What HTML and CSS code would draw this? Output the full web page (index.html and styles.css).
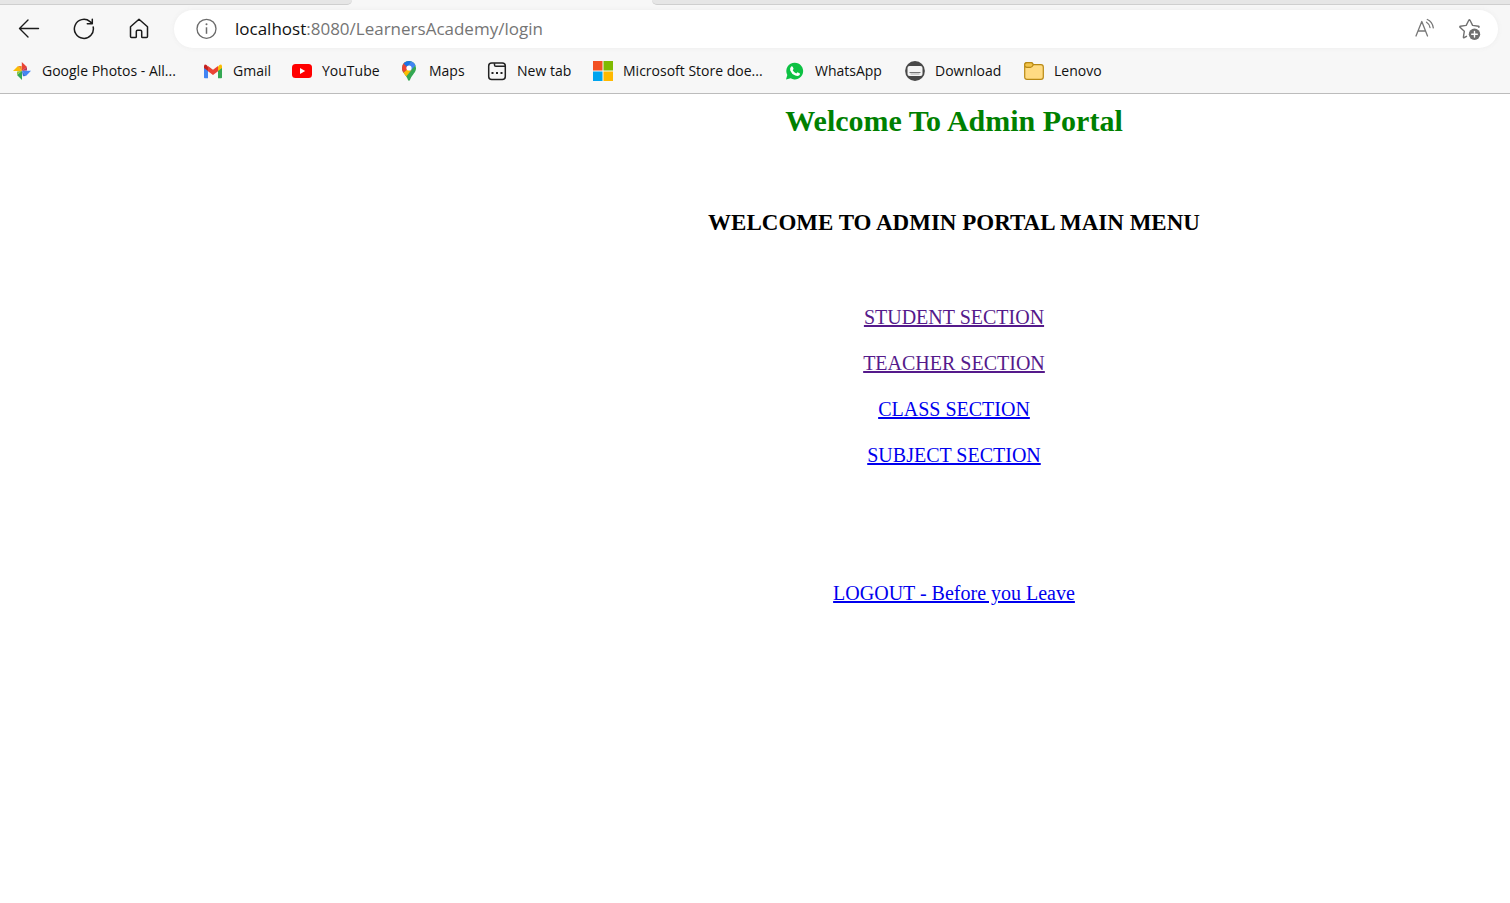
FILE: index.html
```html
<!DOCTYPE html>
<html lang="en">
<head>
<meta charset="utf-8">
<title>Admin Portal</title>
<link rel="stylesheet" href="styles.css">
</head>
<body>
<header class="browser">
  <div class="tabs"><span class="tab tab-left"></span><span class="tab-active"></span><span class="tab tab-right"></span></div>
  <div class="toolbar">
    <button class="tool" aria-label="Back"><svg width="22" height="22" viewBox="0 0 22 22" fill="none" stroke="#1b1b1b" stroke-width="1.4" stroke-linecap="round" stroke-linejoin="round"><path d="M20.5 10.500H1.500M10 2 1.500 10.500l8.500 8.500"/></svg></button>
    <button class="tool" aria-label="Refresh"><svg width="22" height="22" viewBox="0 0 22 22" fill="none" stroke="#1b1b1b" stroke-width="1.5" stroke-linecap="round" stroke-linejoin="round"><path d="M20.200 9A9.500 9.500 0 1 1 17 3.600l2.300 2M19.300 1.200v4.600h-5"/></svg></button>
    <button class="tool" aria-label="Home"><svg width="22" height="22" viewBox="0 0 22 22" fill="none" stroke="#1b1b1b" stroke-width="1.5" stroke-linejoin="round"><path d="M2.500 8.700 11 1.300l8.500 7.400V18.500q0 1-1 1H14.500q-.8 0-.8-.8V13.500q0-1.200-1.200-1.200h-3Q8.300 12.300 8.300 13.500v5.200q0 .8-.8.8h-4q-1 0-1-1z"/></svg></button>
    <div class="address">
      <button class="site-info" aria-label="Site information"><svg width="22" height="22" viewBox="0 0 22 22" fill="none" stroke="#6b6b6b" stroke-width="1.300"><circle cx="11.500" cy="10.800" r="9.500"/><path d="M11.500 9.300v6.500" stroke-width="1.500"/><circle cx="11.500" cy="6.300" r="1" fill="#6b6b6b" stroke="none"/></svg></button>
      <div class="url"><span class="host">localhost</span>:8080/LearnersAcademy/login</div>
      <button class="action" aria-label="Read aloud"><svg width="22" height="22" viewBox="0 0 22 22" fill="none" stroke="#777" stroke-width="1.300" stroke-linecap="round" stroke-linejoin="round"><path d="M2 18 7.800 3.500l5.700 14.500M4 13h7.600M12.500 4.200q3 1.800 3.500 5.300M13.300 1.500q5 2 6 8.300"/></svg></button>
      <button class="action" aria-label="Add to favorites"><svg width="24" height="24" viewBox="0 0 24 24" fill="none" stroke="#707070" stroke-width="1.400" stroke-linejoin="round" stroke-linecap="round"><path d="m8.500 19.300-2.300 1.400q-.9.400-.8-.6l.9-5.800L2 10.300q-.6-.8.400-1.100L8.200 8.400 10.900 3q.5-.8 1 0l2.700 5.400 5.900.8q1 .3.300 1"/><circle cx="16.500" cy="17.300" r="5.700" fill="#707070" stroke="none"/><path d="M16.500 14.500v5.600M13.700 17.300h5.600" stroke="#fff"/></svg></button>
    </div>
  </div>
  <nav class="bookmarks" aria-label="Favorites">
    <a href="#"><svg width="20" height="20" viewBox="0 0 20 20"><path fill="#e94335" d="M9.800 1 15 6 9.800 10z"/><path fill="#b83a5e" d="M15 6v3.500L9.800 10z"/><path fill="#4285f4" d="M19 9.800 14 15 9.800 9.800z"/><path fill="#3571d8" d="m14 15-3 .3-1.200-5.500z"/><path fill="#34a853" d="M10 19 5 14l5-4.200z"/><path fill="#8fc63f" d="M5 14v-3.500l5-.7z"/><path fill="#fbbc04" d="M1 9.900 6 5l4 4.900z"/><path fill="#f08a24" d="M6 5h3.600l.4 5z"/></svg>Google Photos - All...</a>
    <a href="#"><svg width="20" height="20" viewBox="0 0 20 20"><path fill="#4285f4" d="M1 6v10.500q0 .8.800.8H5V9z"/><path fill="#34a853" d="M15 9v8.300h3.200q.8 0 .8-.8V6z"/><path fill="#fbbc04" d="M15 5.500V10l4-3V5q-.6-2.300-2.500-1z"/><path fill="#ea4335" d="M5 5 10 8.700 15 5v5.200l-5 3.800-5-3.800z"/><path fill="#c5221f" d="M5 5.500V10L1 7V5q.6-2.300 2.500-1z"/></svg>Gmail</a>
    <a href="#"><svg width="20" height="20" viewBox="0 0 20 20"><rect y="3" width="20" height="14" rx="3.500" fill="#f00"/><path fill="#fff" d="m8 7 5.200 3L8 13z"/></svg>YouTube</a>
    <a href="#"><svg width="20" height="20" viewBox="0 0 20 20"><defs><clipPath id="pin"><path d="M10 0a7 7 0 0 0-7 7.200c0 4 3.400 6 5.400 10.200.5 1 .6 2.300 1.600 2.300s1.100-1.300 1.600-2.300C13.600 13.200 17 11.200 17 7.200A7 7 0 0 0 10 0"/></clipPath></defs><g clip-path="url(#pin)"><path fill="#34a853" d="M0 0h20v20H0z"/><path fill="#fbbc04" d="m2 14 8-8 2.500 3L6 17z"/><path fill="#ea4335" d="M0 0h6l4 7-6 5-4-2z"/><path fill="#1a73e8" d="m4.500 2.500 4 4L13-1H5z"/><path fill="#4285f4" d="M8 7 13-1l4 5-6 6z"/></g><circle cx="10" cy="7" r="2.600" fill="#fff"/></svg>Maps</a>
    <a href="#"><svg width="20" height="20" viewBox="0 0 20 20" fill="none" stroke="#222" stroke-width="1.500"><rect x="1.700" y="2" width="16.600" height="16.600" rx="3"/><path d="M7.500 2.300V4q0 1.300 1.300 1.300H18"/><path d="M4.500 12h2m2.500 0h2m2.500 0h2" stroke-width="2"/></svg>New tab</a>
    <a href="#"><svg width="20" height="20" viewBox="0 0 20 20"><path fill="#f25022" d="M0 0h9.500v9.500H0z"/><path fill="#7fba00" d="M10.500 0H20v9.500h-9.500z"/><path fill="#00a4ef" d="M0 10.500h9.500V20H0z"/><path fill="#ffb900" d="M10.500 10.500H20V20h-9.500z"/></svg>Microsoft Store doe...</a>
    <a href="#"><svg width="20" height="20" viewBox="0 0 20 20"><path fill="#0dc143" d="M9.700 1.800a8.300 8.300 0 1 1-4 15.500L1 18.500l1.300-4.400A8.300 8.300 0 0 1 9.700 1.800"/><path fill="#fff" d="M6.200 5.500q.9-.6 1.500.3l.8 1.800q.2.500-.8 1.600 1.300 2.500 3.600 3.200l1.100-1.200 2.200 1q.7.500 0 1.700-1.500 1.800-4.300.7-3.700-1.500-5.100-5.200-.6-2.400 1-3.900"/></svg>WhatsApp</a>
    <a href="#"><svg width="20" height="20" viewBox="0 0 20 20"><circle cx="10" cy="10" r="9.900" fill="#484848"/><rect x="2.500" y="5" width="15" height="10" rx="2" fill="#f4f4f4"/><path d="M4.500 11.500h11" stroke="#777" stroke-width="1"/><path d="M5.500 13h9" stroke="#aaa" stroke-width="1"/></svg>Download</a>
    <a href="#"><svg width="20" height="20" viewBox="0 0 20 20" fill="#ffdb82" stroke="#b98913" stroke-width="1.200" stroke-linejoin="round"><path d="M.7 4Q.7 1.700 3 1.700h4q1 0 1.700 1l.6 1h7.700q2.300 0 2.300 2.300v10q0 2.300-2.300 2.300H3Q.7 18.300.7 16z"/><path fill="#f2c44b" d="M.7 4Q.7 1.700 3 1.700h4q1 0 1.700 1l.6 1Q8 6.300 6.500 6.300H3Q.7 6.300.7 4z"/></svg>Lenovo</a>
  </nav>
</header>
<main class="portal">
  <h1>Welcome To Admin Portal</h1>
  <h2>WELCOME TO ADMIN PORTAL MAIN MENU</h2>
  <nav class="menu" aria-label="Main menu">
    <a class="seen" href="#">STUDENT SECTION</a>
    <a class="seen" href="#">TEACHER SECTION</a>
    <a href="#">CLASS SECTION</a>
    <a href="#">SUBJECT SECTION</a>
  </nav>
  <a class="logout" href="#">LOGOUT - Before you Leave</a>
</main>
</body>
</html>
```
FILE: styles.css
```css
* {
  box-sizing: border-box;
}

body {
  margin: 0;
  background: #fff;
}

.browser {
  background: #f7f7f7;
  border-bottom: 1px solid #bcbcbc;
  font-family: "Open Sans", "Noto Sans", sans-serif;
}

.tabs {
  display: flex;
  height: 5px;
}

.tab {
  background: #e6e6e6;
  border-bottom: 1px solid #cfcfcf;
}

.tab-left {
  width: 352px;
  border-bottom-right-radius: 5px;
}

.tab-active {
  width: 300px;
}

.tab-right {
  flex: 1;
  border-bottom-left-radius: 5px;
}

button {
  display: flex;
  padding: 0;
  border: 0;
  background: none;
}

.toolbar {
  display: flex;
  align-items: center;
  gap: 33px;
  padding: 5px 12px 5px 18px;
}

.address {
  display: flex;
  flex: 1;
  align-items: center;
  height: 38px;
  margin-left: -9px;
  padding: 0 16px 0 21px;
  border-radius: 19px;
  background: #fff;
  box-shadow: 0 0 5px #ececec;
}

.url {
  flex: 1;
  margin-left: 18px;
  color: #757575;
  font-size: 17px;
  line-height: 24px;
}

.host {
  color: #111;
}

.action {
  margin-left: 22px;
}

.bookmarks {
  display: grid;
  grid-template-columns: 191px 89px 107px 88px 106px 192px 120px 119px auto;
  padding: 8px 12px 12px;
}

.bookmarks a {
  display: flex;
  align-items: center;
  gap: 10px;
  color: #111;
  font-size: 14px;
  line-height: 20px;
  text-decoration: none;
  white-space: nowrap;
}

.portal {
  display: flex;
  flex-direction: column;
  align-items: center;
  padding: 10px 0 0 398px;
  font-family: "Liberation Serif", serif;
  font-size: 20px;
  line-height: 24px;
}

h1 {
  margin: 0;
  color: #008000;
  font-size: 30px;
  line-height: 34px;
}

h2 {
  margin: 72px 0 69px;
  font-size: 23px;
  line-height: 26px;
}

.menu {
  display: flex;
  flex-direction: column;
  align-items: center;
  gap: 22px;
  margin-bottom: 114px;
}

.portal a {
  color: #0000ee;
}

.portal .seen {
  color: #551a8b;
}
```
